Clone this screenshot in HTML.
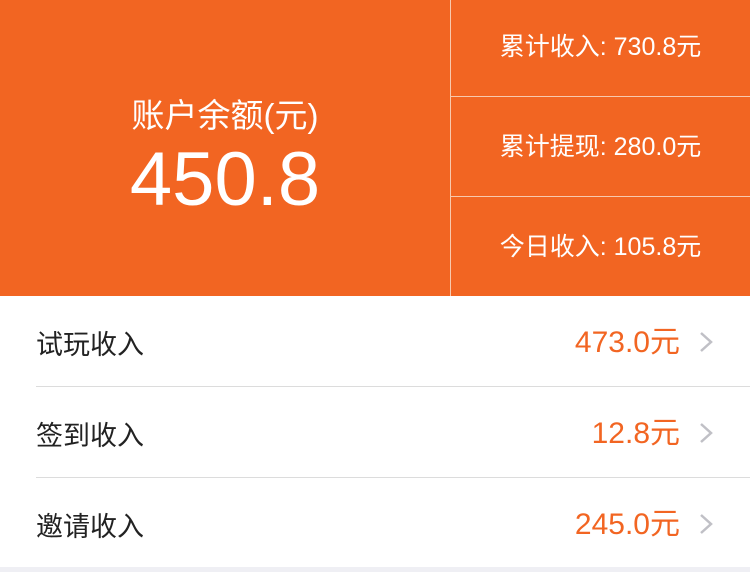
<!DOCTYPE html>
<html><head><meta charset="utf-8"><style>
*{margin:0;padding:0;box-sizing:border-box}
body{width:750px;height:572px;background:#efeff4;font-family:"Liberation Sans","Noto Sans CJK SC",sans-serif;position:relative;overflow:hidden}
.top{position:absolute;left:0;top:0;width:750px;height:296px;background:#f26522}
.vl{position:absolute;left:450px;top:0;width:1px;height:296px;background:#f8c8ad}
.hl{position:absolute;left:451px;width:299px;height:1px;background:#f8c8ad}
.lt{position:absolute;left:0;width:450px;text-align:center;color:#fff}
.rt{position:absolute;left:451px;width:299px;text-align:center;color:#fff;font-size:25px;line-height:30px}
.list{position:absolute;left:0;top:296px;width:750px;height:271px;background:#fff}
.row{position:absolute;left:0;width:750px;height:90px}
.lab{position:absolute;left:36px;top:4px;line-height:90px;font-size:27px;color:#222}
.val{position:absolute;right:70px;top:2px;line-height:90px;font-size:30px;color:#f26522}
.chev{position:absolute;left:698px;top:35px}
.sep{position:absolute;left:36px;right:0;height:1px;background:#dcdcdc}
</style></head><body>
<div class="top">
<div class="lt" style="top:95px;font-size:33px;line-height:42px">账户余额(元)</div>
<div class="lt" style="top:137px;font-size:76px;line-height:86px">450.8</div>
<div class="vl"></div>
<div class="hl" style="top:96px"></div>
<div class="hl" style="top:196px"></div>
<div class="rt" style="top:32px">累计收入: 730.8元</div>
<div class="rt" style="top:132px">累计提现: 280.0元</div>
<div class="rt" style="top:232px">今日收入: 105.8元</div>
</div>
<div class="list">
<div class="row" style="top:0"><div class="lab">试玩收入</div><div class="val">473.0元</div><svg class="chev" width="16" height="22" viewBox="0 0 16 22"><path d="M3 2l10 9-10 9" fill="none" stroke="#c0c0c6" stroke-width="2.5"/></svg></div>
<div class="sep" style="top:90px"></div>
<div class="row" style="top:91px"><div class="lab">签到收入</div><div class="val">12.8元</div><svg class="chev" width="16" height="22" viewBox="0 0 16 22"><path d="M3 2l10 9-10 9" fill="none" stroke="#c0c0c6" stroke-width="2.5"/></svg></div>
<div class="sep" style="top:181px"></div>
<div class="row" style="top:182px"><div class="lab">邀请收入</div><div class="val">245.0元</div><svg class="chev" width="16" height="22" viewBox="0 0 16 22"><path d="M3 2l10 9-10 9" fill="none" stroke="#c0c0c6" stroke-width="2.5"/></svg></div>
</div>
</body></html>
